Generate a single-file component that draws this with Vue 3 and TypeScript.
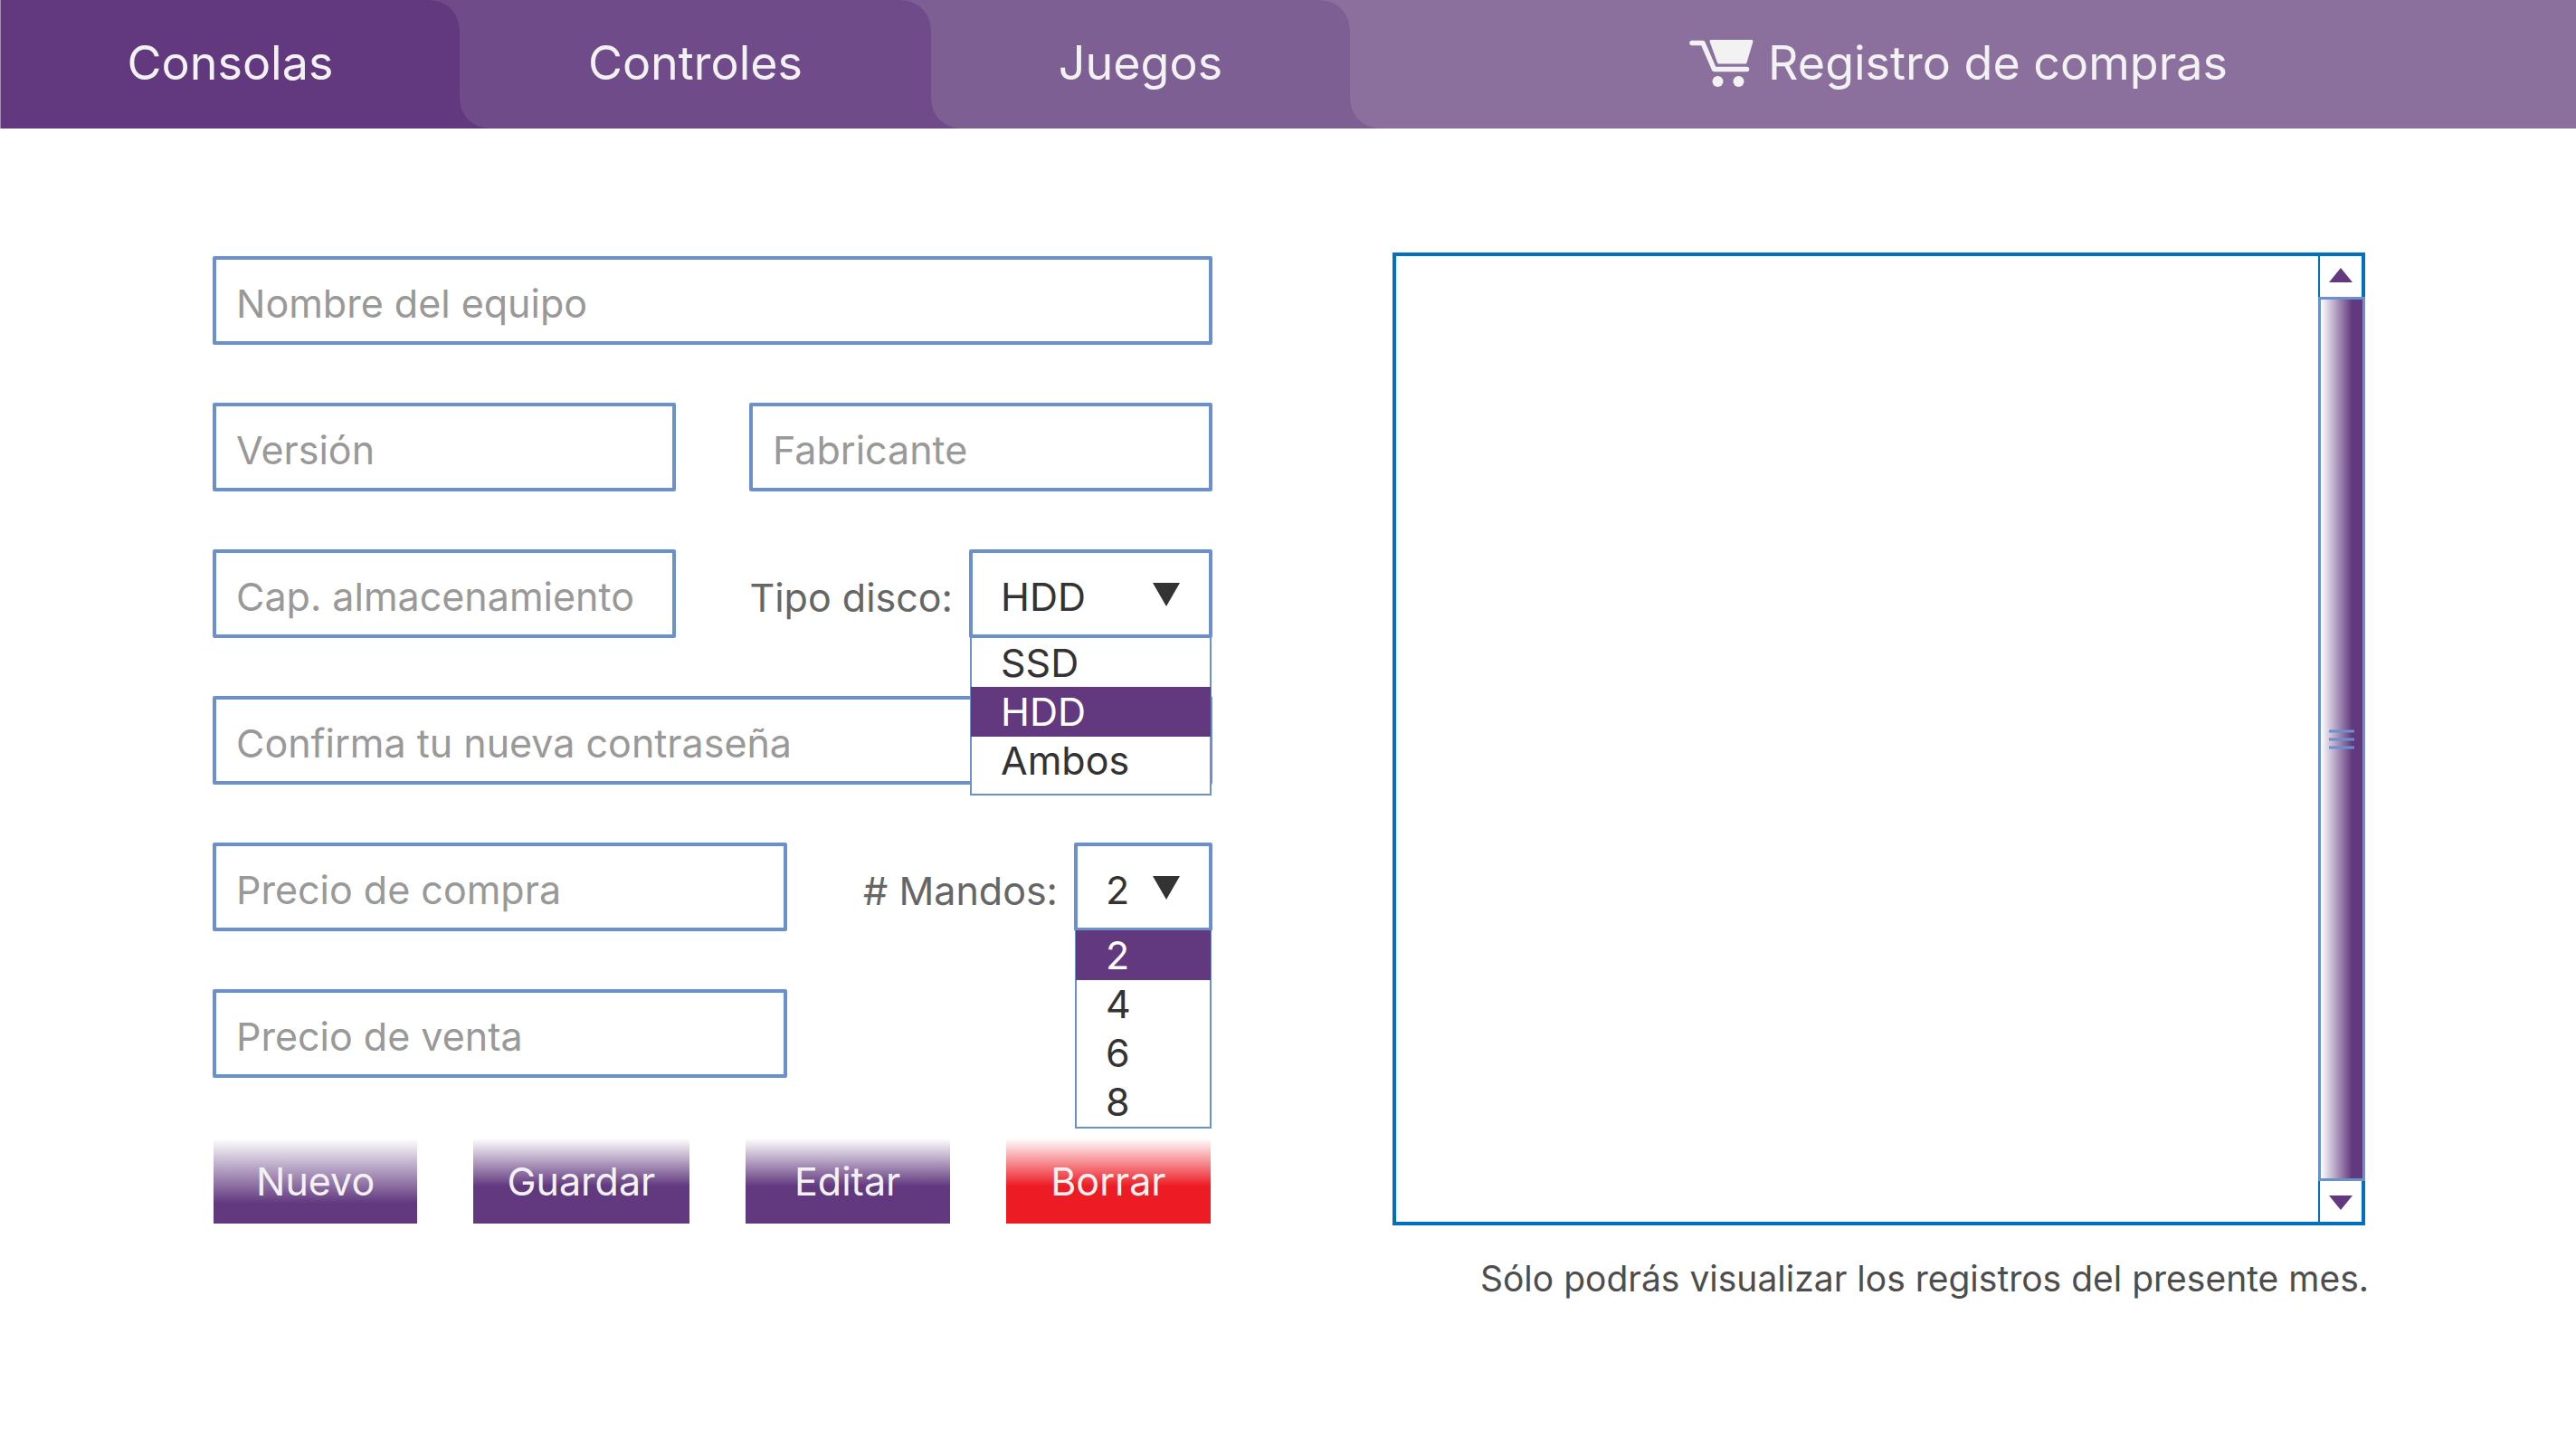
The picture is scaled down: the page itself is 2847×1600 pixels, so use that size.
<script setup lang="ts">
import { ref } from 'vue'

const tabs = ['Consolas', 'Controles', 'Juegos']
const diskTypes = ['SSD', 'HDD', 'Ambos']
const padCounts = ['2', '4', '6', '8']

const disk = ref('HDD')
const pads = ref('2')
const form = ref({ name: '', version: '', maker: '', storage: '', confirm: '', buy: '', sell: '' })
</script>

<template>
  <div class="page">
    <nav class="tabs">
      <a v-for="(tab, i) in tabs" :key="tab" href="#" class="tab" :class="'tab-' + (i + 1)">{{ tab }}</a>
      <a href="#" class="tab tab-4">
        <svg class="cart" viewBox="0 0 71 52" aria-hidden="true">
          <path d="M3 3.500H15L27.500 32.500H63.500" fill="none" stroke="#f2f2f2" stroke-width="5.500" stroke-linecap="round" stroke-linejoin="round" />
          <path d="M24 1.500H69L62 25H32.500Z" fill="#f2f2f2" stroke="#f2f2f2" stroke-width="3" stroke-linejoin="round" />
          <circle cx="31.500" cy="46" r="6" fill="#f2f2f2" />
          <circle cx="54.500" cy="46" r="6" fill="#f2f2f2" />
        </svg>
        <span>Registro de compras</span>
      </a>
    </nav>

    <main class="content">
      <form class="form" @submit.prevent>
        <div class="row">
          <input v-model="form.name" class="field" type="text" placeholder="Nombre del equipo" aria-label="Nombre del equipo" />
        </div>
        <div class="row halves">
          <input v-model="form.version" class="field" type="text" placeholder="Versión" aria-label="Versión" />
          <input v-model="form.maker" class="field" type="text" placeholder="Fabricante" aria-label="Fabricante" />
        </div>
        <div class="row halves">
          <input v-model="form.storage" class="field" type="text" placeholder="Cap. almacenamiento" aria-label="Cap. almacenamiento" />
          <div class="choice">
            <label for="disk">Tipo disco:</label>
            <div class="picker disk">
              <select id="disk" v-model="disk">
                <option v-for="d in diskTypes" :key="d">{{ d }}</option>
              </select>
              <svg class="caret" viewBox="0 0 30 26" aria-hidden="true"><path d="M0 0H30L15 26Z" fill="#333" /></svg>
              <ul class="menu" role="listbox" aria-label="Tipo disco">
                <li v-for="d in diskTypes" :key="d" role="option" :aria-selected="d === disk" :class="{ on: d === disk }" @click="disk = d">{{ d }}</li>
              </ul>
            </div>
          </div>
        </div>
        <div class="row">
          <input v-model="form.confirm" class="field" type="text" placeholder="Confirma tu nueva contraseña" aria-label="Confirma tu nueva contraseña" />
        </div>
        <div class="row price">
          <input v-model="form.buy" class="field" type="text" placeholder="Precio de compra" aria-label="Precio de compra" />
          <div class="choice">
            <label for="pads"># Mandos:</label>
            <div class="picker pads">
              <select id="pads" v-model="pads">
                <option v-for="n in padCounts" :key="n">{{ n }}</option>
              </select>
              <svg class="caret" viewBox="0 0 30 26" aria-hidden="true"><path d="M0 0H30L15 26Z" fill="#333" /></svg>
              <ul class="menu" role="listbox" aria-label="# Mandos">
                <li v-for="n in padCounts" :key="n" role="option" :aria-selected="n === pads" :class="{ on: n === pads }" @click="pads = n">{{ n }}</li>
              </ul>
            </div>
          </div>
        </div>
        <div class="row price">
          <input v-model="form.sell" class="field" type="text" placeholder="Precio de venta" aria-label="Precio de venta" />
        </div>
        <div class="actions">
          <button type="button" class="action late">Nuevo</button>
          <button type="submit" class="action">Guardar</button>
          <button type="button" class="action">Editar</button>
          <button type="button" class="action danger">Borrar</button>
        </div>
      </form>

      <section class="records">
        <div class="panel">
          <div class="list"></div>
          <div class="bar">
            <button type="button" class="step up" aria-label="Subir">
              <svg viewBox="0 0 26 16" aria-hidden="true"><path d="M0 16H26L13 0Z" fill="#62397f" /></svg>
            </button>
            <div class="thumb">
              <svg viewBox="0 0 28 22" aria-hidden="true"><path d="M0 2H28M0 11H28M0 20H28" stroke="#6b90ce" stroke-width="3" /></svg>
            </div>
            <button type="button" class="step down" aria-label="Bajar">
              <svg viewBox="0 0 26 16" aria-hidden="true"><path d="M0 0H26L13 16Z" fill="#62397f" /></svg>
            </button>
          </div>
        </div>
        <p class="note">Sólo podrás visualizar los registros del presente mes.</p>
      </section>
    </main>
  </div>
</template>

<style>
body {
  margin: 0;
  background: #fff;
}
</style>

<style scoped>
.page,
.page * {
  box-sizing: border-box;
}

.page {
  font-family: Inter, 'Liberation Sans', sans-serif;
  font-size: 43px;
  line-height: 54px;
  color: #333;
}

.tabs {
  display: grid;
  grid-template-columns: 508fr 521fr 463fr 1355fr;
  height: 142px;
}

.tab {
  position: relative;
  display: flex;
  align-items: center;
  justify-content: center;
  gap: 16px;
  padding-bottom: 2px;
  background: var(--own);
  color: #f2f2f2;
  font-size: 52px;
  line-height: 60px;
  text-decoration: none;
}

.tab-1 { --own: #62397f; --next: #6f4c89; border-left: 1px solid #a58cb5; }
.tab-2 { --prev: #62397f; --own: #6f4c89; --next: #7d5f93; }
.tab-3 { --prev: #6f4c89; --own: #7d5f93; --next: #8b709d; }
.tab-4 { --prev: #7d5f93; --own: #8b709d; padding-right: 10px; }

/* The curved seams between neighbouring tabs */
.tab:not(.tab-4)::after {
  content: '';
  position: absolute;
  top: 0;
  right: 0;
  width: 32px;
  height: 32px;
  background: radial-gradient(circle at 0 100%, transparent 31px, var(--next) 32px);
}

.tab:not(.tab-1)::before {
  content: '';
  position: absolute;
  bottom: 0;
  left: 0;
  width: 32px;
  height: 32px;
  background: radial-gradient(circle at 100% 0, transparent 31px, var(--prev) 32px);
}

.cart {
  width: 71px;
  height: 52px;
}

.content {
  display: grid;
  grid-template-columns: 1105fr 1075fr;
  gap: 199px;
  padding: 137px 233px 120px 235px;
  align-items: start;
}

.form {
  display: flex;
  flex-direction: column;
  gap: 64px;
  padding-top: 4px;
}

.row {
  display: grid;
  height: 98px;
}

.halves {
  grid-template-columns: 1fr 1fr;
  gap: 81px;
}

.price {
  grid-template-columns: 635fr 389fr;
  gap: 81px;
}

.field {
  width: 100%;
  min-width: 0;
  padding: 5px 20px 0 22px;
  border: 4px solid #6b90ce;
  border-radius: 2px;
  background: #fff;
  color: #333;
  font: inherit;
  outline: none;
}

.field::placeholder {
  color: #999;
  opacity: 1;
}

.choice {
  display: flex;
  align-items: center;
  justify-content: flex-end;
  gap: 18px;
  color: #666;
  white-space: nowrap;
}

.choice label {
  padding-top: 8px;
}

.picker {
  position: relative;
  height: 98px;
  color: #333;
}

.disk { width: 269px; }
.pads { width: 153px; }

.picker select {
  width: 100%;
  height: 100%;
  padding: 5px 0 0 31px;
  border: 4px solid #6b90ce;
  border-radius: 2px;
  background: #fff;
  color: #333;
  font: inherit;
  appearance: none;
  outline: none;
}

.caret {
  position: absolute;
  top: 37px;
  right: 36px;
  width: 30px;
  height: 26px;
  pointer-events: none;
}

.menu {
  position: absolute;
  z-index: 1;
  top: 97px;
  left: 1px;
  right: 1px;
  margin: 0;
  padding: 0 0 10px;
  border: 2px solid #6b90ce;
  border-top: 0;
  background: #fff;
  list-style: none;
}

.disk .menu { border-top: 1px solid #6b90ce; }
.pads .menu { padding-bottom: 1px; }

.menu li {
  margin: 0 -1px;
  padding-left: 33px;
}

.menu li.on {
  background: #62397f;
  box-shadow: 0 1px 0 #62397f;
  color: #fff;
}

.actions {
  display: grid;
  grid-template-columns: 225fr 238fr 226fr 226fr;
  gap: 62px;
  padding: 3px 2px 0 1px;
}

.action {
  height: 94px;
  padding: 0;
  border: 0;
  background: linear-gradient(#fff, #62397f 56%);
  color: #f2f2f2;
  font: inherit;
}

.late { background: linear-gradient(#fff, #62397f 76%); }
.danger { background: linear-gradient(#fff, #ed1c24 56%); }

.panel {
  display: flex;
  aspect-ratio: 1;
  border: 4px solid #0070c0;
}

.list {
  flex: 1;
}

.bar {
  display: flex;
  flex-direction: column;
  width: 48px;
}

.step {
  display: flex;
  align-items: center;
  justify-content: center;
  height: 45px;
  padding: 0;
  border: 0;
  border-left: 2px solid #0070c0;
  background: #fff;
}

.up { padding-bottom: 3px; }
.down { padding-top: 3px; }

.step svg {
  width: 26px;
  height: 16px;
}

.thumb {
  display: flex;
  flex: 1;
  align-items: center;
  justify-content: center;
  margin-right: -4px;
  border: 3px solid #6b90ce;
  background: linear-gradient(90deg, #fff, #62397f 75%);
}

.thumb svg {
  width: 28px;
  height: 22px;
}

.note {
  margin: 32px -4px 0 0;
  color: #4d4d4d;
  font-size: 39px;
  text-align: right;
  white-space: nowrap;
}
</style>
